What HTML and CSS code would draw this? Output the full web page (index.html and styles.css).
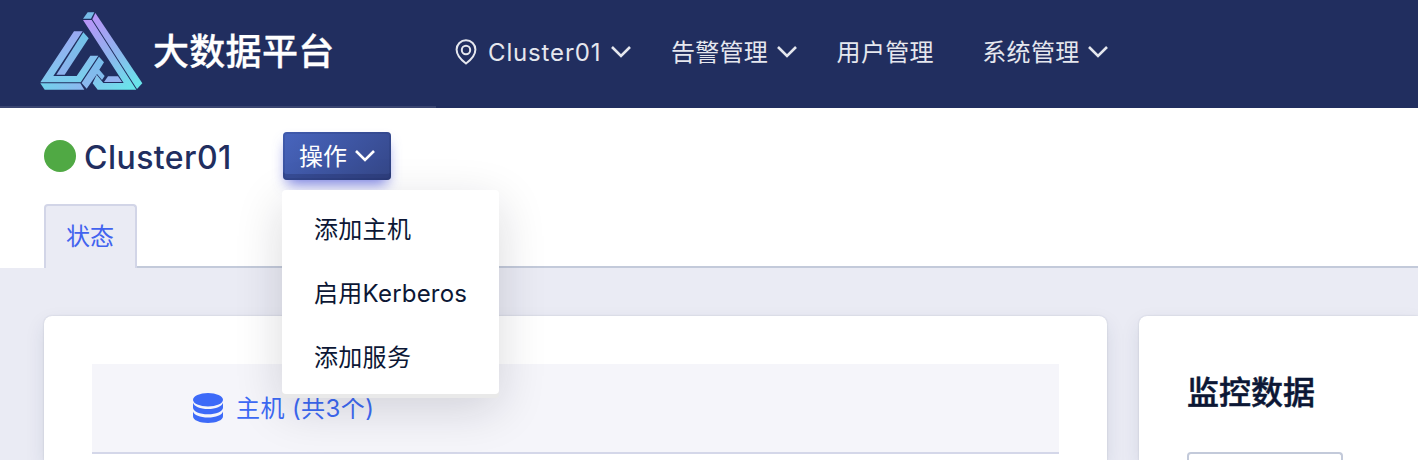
FILE: index.html
```html
<!DOCTYPE html>
<html lang="zh-CN">
<head>
<meta charset="utf-8">
<title>大数据平台</title>
<link rel="stylesheet" href="styles.css">
</head>
<body>
<header class="topbar">
  <div class="brand">
    <svg class="logo" viewBox="0 0 390 324">
      <defs>
        <linearGradient id="gl" gradientUnits="userSpaceOnUse" x1="130" y1="90" x2="175" y2="255"><stop offset="0" stop-color="#9ba6f2"/><stop offset="1" stop-color="#74d6ec"/></linearGradient>
        <linearGradient id="gr" gradientUnits="userSpaceOnUse" x1="170" y1="60" x2="300" y2="265"><stop offset="0" stop-color="#b894f8"/><stop offset=".5" stop-color="#90b2ee"/><stop offset="1" stop-color="#69e4ea"/></linearGradient>
        <linearGradient id="gb" gradientUnits="userSpaceOnUse" x1="35" y1="0" x2="165" y2="0"><stop offset="0" stop-color="#70d2ec"/><stop offset="1" stop-color="#8fb6ef"/></linearGradient>
        <linearGradient id="gi" gradientUnits="userSpaceOnUse" x1="165" y1="100" x2="85" y2="225"><stop offset="0" stop-color="#70c4e8"/><stop offset="1" stop-color="#8fb0ee"/></linearGradient>
        <linearGradient id="gs" gradientUnits="userSpaceOnUse" x1="210" y1="175" x2="165" y2="265"><stop offset="0" stop-color="#78bdeb"/><stop offset="1" stop-color="#8cb8ef"/></linearGradient>
      </defs>
      <path fill="#78bce8" d="M173 37h20l-10 19h-24z"/>
      <path fill="url(#gr)" d="M159 60h26l134 209H203l-15-19 12-26 20 25h61z"/>
      <path fill="url(#gr)" d="M196 39l141 211-16 17L187 58z"/>
      <path fill="#93b2ee" d="M234 229h30l12 17h-54z"/>
      <path fill="url(#gl)" d="M132 94h26L70 228h70l41-61h24l-53 80H31z"/>
      <path fill="url(#gi)" d="M160 97l16 18-72 109H79z"/>
      <path fill="url(#gb)" d="M31 250h120l12 19H44z"/>
      <path fill="url(#gs)" d="M207 170l15 17-14 22 16 19-8 12-15-18-31 44-15-17z"/>
    </svg>
    <h1 class="brand-name">大数据平台</h1>
  </div>
  <nav class="nav">
    <a class="nav-item nav-cluster">
      <svg class="pin" viewBox="0 0 24 28"><path d="M12 25.5C8.500 23 2.600 18.200 2.600 11.600a9.400 9.400 0 0 1 18.800 0C21.400 18.200 15.500 23 12 25.500z"/><circle cx="12" cy="12" r="4.200"/></svg>
      <span class="latin">Cluster01</span>
      <svg class="chevron" viewBox="0 0 22 14"><path d="M2 2l9 9 9-9"/></svg>
    </a>
    <a class="nav-item nav-alarm"><span class="label">告警管理</span><svg class="chevron" viewBox="0 0 22 14"><path d="M2 2l9 9 9-9"/></svg></a>
    <a class="nav-item nav-user"><span class="label">用户管理</span></a>
    <a class="nav-item"><span class="label">系统管理</span><svg class="chevron" viewBox="0 0 22 14"><path d="M2 2l9 9 9-9"/></svg></a>
  </nav>
</header>
<section class="page-head">
  <div class="title-row">
    <span class="status-dot"></span>
    <h2 class="cluster-name">Cluster01</h2>
    <div class="actions">
      <button class="action-btn"><span class="label">操作</span><svg class="chevron" viewBox="0 0 22 14"><path d="M2 2l9 9 9-9"/></svg></button>
      <ul class="menu">
        <li>添加主机</li>
        <li>启用<span class="kerberos">Kerberos</span></li>
        <li>添加服务</li>
      </ul>
    </div>
  </div>
  <div class="tabs">
    <div class="tab-lead"></div>
    <div class="tab">状态</div>
    <div class="tab-rest"></div>
  </div>
</section>
<main class="content">
  <section class="card card-hosts">
    <div class="host-row">
      <svg class="db" viewBox="0 0 30 30"><ellipse cx="15" cy="6.700" rx="15" ry="6.700"/><path d="M0 9.500C1 13.500 7 16 15 16s14-2.500 15-6.500v5c0 4-7 6.800-15 6.800S0 18.500 0 14.500z"/><path d="M0 18.500C1 22 7 24.500 15 24.500s14-2.500 15-6v4.800c0 4-7 6.700-15 6.700S0 27.300 0 23.300z"/></svg>
      <span class="host-label">主机 (共3个)</span>
    </div>
  </section>
  <section class="card card-monitor">
    <h3 class="card-title">监控数据</h3>
    <div class="select"></div>
  </section>
</main>
</body>
</html>
```
FILE: styles.css
```css
* { box-sizing: border-box; }
body {
  margin: 0;
  display: flex;
  flex-direction: column;
  height: 460px;
  overflow: hidden;
  background: #eaebf4;
  font-family: Inter, "Noto Sans CJK SC", sans-serif;
  font-size: 24px;
  color: #0c1735;
}
h1, h2, h3, ul { margin: 0; padding: 0; }
.topbar {
  display: flex;
  flex: none;
  height: 108px;
  background: #212e5f;
  color: #e5e7ee;
}
.brand {
  display: flex;
  width: 436px;
  padding-left: 30px;
  border-bottom: 2px solid #3a4571;
}
.logo { width: 130px; height: 108px; flex: none; }
.brand-name {
  margin-left: -7px;
  line-height: 104px;
  font-size: 36px;
  font-weight: 500;
  letter-spacing: 0.3px;
  color: #fff;
  -webkit-text-stroke: 0.3px currentColor;
  white-space: nowrap;
}
.nav { display: flex; height: 104px; }
.nav-item {
  display: flex;
  align-items: center;
  letter-spacing: 0.3px;
  white-space: nowrap;
}
.label { padding-bottom: 4px; }
.nav-cluster { margin-left: 18px; margin-right: 39px; }
.nav-alarm { margin-right: 39px; }
.nav-user { margin-right: 48.5px; }
.latin { margin-left: 10px; padding-top: 1px; letter-spacing: 0.85px; }
.pin { width: 24px; height: 28px; }
.pin, .chevron { flex: none; fill: none; stroke: currentColor; stroke-width: 2; }
.chevron { width: 22px; height: 14px; margin-left: 7.5px; stroke-width: 2.6; }
.nav-cluster .chevron { margin-left: 8.5px; }
.page-head { flex: none; height: 160px; background: #fff; }
.title-row {
  display: flex;
  align-items: center;
  height: 96px;
  padding-left: 44px;
}
.status-dot { width: 32px; height: 32px; border-radius: 50%; background: #50a944; }
.cluster-name {
  width: 199px;
  margin-left: 8px;
  padding-top: 2px;
  font-size: 32px;
  font-weight: 500;
  letter-spacing: 0.45px;
  color: #212e5f;
}
.actions { position: relative; }
.action-btn {
  display: flex;
  align-items: center;
  width: 108px;
  height: 48px;
  padding: 0 0 0 16px;
  border: 0;
  border-radius: 4px;
  background: linear-gradient(135deg, #4865be, #344687);
  box-shadow: inset 0 -6px 0 rgba(30, 42, 100, .32), inset 0 0 0 2px rgba(30, 42, 100, .18), 0 8px 14px -4px rgba(76, 85, 220, .75);
  color: #fff;
  font: inherit;
}
.action-btn .chevron { margin-left: 7px; }
.menu {
  position: absolute;
  z-index: 5;
  top: 58px;
  left: -1px;
  width: 217px;
  height: 204px;
  padding: 8px 0;
  list-style: none;
  border-radius: 4px;
  background: #fff;
  box-shadow: 0 4px 0 #e9e9e9, 0 14px 48px rgba(20, 20, 40, .16);
}
.menu li {
  height: 64px;
  padding-left: 32px;
  line-height: 64px;
  letter-spacing: 0.3px;
  white-space: nowrap;
}
.kerberos { letter-spacing: 0.2px; }
.tabs { display: flex; height: 64px; }
.tab-lead { width: 44px; }
.tab {
  width: 93px;
  padding-left: 20px;
  border: 2px solid #d2d5e7;
  border-bottom: 0;
  border-radius: 4px 4px 0 0;
  background: #eaebf4;
  line-height: 62px;
  color: #4263ef;
}
.tab-rest { flex: 1; border-bottom: 2px solid #c3cada; }
.content {
  display: flex;
  flex: 1;
  gap: 32px;
  min-height: 0;
  padding: 48px 0 0 44px;
}
.card {
  padding: 48px 48px 0;
  border-radius: 8px 8px 0 0;
  background: #fff;
  box-shadow: 0 0 2px rgba(30, 50, 80, .18), 0 8px 20px rgba(30, 50, 90, .1);
}
.card-hosts { flex: none; width: 1063px; }
.host-row {
  display: flex;
  align-items: center;
  height: 90px;
  padding-left: 101px;
  border-bottom: 2px solid #d4d7e9;
  background: #f5f5fa;
  color: #3d6af5;
}
.host-label { padding-bottom: 3px; letter-spacing: 0.4px; }
.db { width: 30px; height: 30px; margin-right: 13px; fill: #3d6af8; }
.card-monitor { flex: 1; border-top-right-radius: 0; }
.card-title {
  height: 88px;
  line-height: 58px;
  font-size: 32px;
  font-weight: 500;
  -webkit-text-stroke: 0.5px currentColor;
}
.select {
  width: 156px;
  height: 8px;
  border: 2px solid #c3cada;
  border-bottom: 0;
  border-radius: 4px 4px 0 0;
}
```
